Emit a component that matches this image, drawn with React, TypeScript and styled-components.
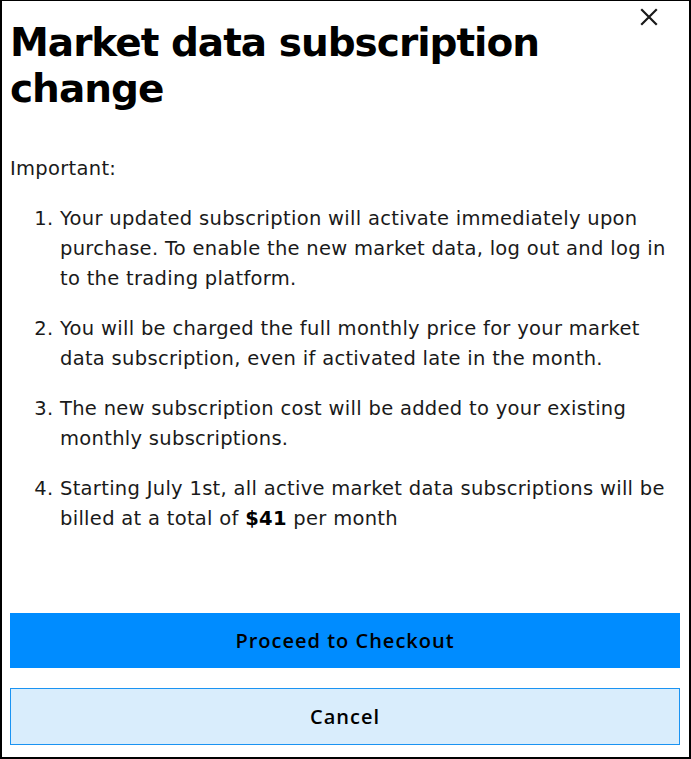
import * as React from "react";
import styled, { createGlobalStyle } from "styled-components";

const GlobalStyle = createGlobalStyle`
  html, body {
    margin: 0;
    padding: 0;
    background: #ffffff;
  }
  body {
    font-family: "DejaVu Sans", "Noto Sans", sans-serif;
    color: #1a1a1a;
  }
`;

const notes: React.ReactNode[] = [
  "Your updated subscription will activate immediately upon purchase. To enable the new market data, log out and log in to the trading platform.",
  "You will be charged the full monthly price for your market data subscription, even if activated late in the month.",
  "The new subscription cost will be added to your existing monthly subscriptions.",
  <>
    Starting July 1st, all active market data subscriptions will be billed at a
    total of <b>$41</b> per month
  </>,
];

const App: React.FC = () => {
  return (
    <>
      <GlobalStyle />
      <Dialog>
        <CloseButton aria-label="Close">
          <svg width="18" height="18" viewBox="0 0 18 18">
            <path
              d="M2 2 L16 16 M16 2 L2 16"
              stroke="#1a1a1a"
              strokeWidth="2.2"
              strokeLinecap="square"
            />
          </svg>
        </CloseButton>
        <Title>Market data subscription change</Title>
        <Body>
          <Lead>Important:</Lead>
          <Notes>
            {notes.map((note, index) => (
              <li key={index}>{note}</li>
            ))}
          </Notes>
        </Body>
        <Actions>
          <ActionButton $primary>Proceed to Checkout</ActionButton>
          <ActionButton>Cancel</ActionButton>
        </Actions>
      </Dialog>
    </>
  );
};

const Dialog = styled.div`
  position: relative;
  box-sizing: border-box;
  width: 691px;
  height: 759px;
  border: 2px solid #000;
  border-top-width: 1px;
  background: #fff;
  padding: 19px 9px 12px 8px;
  display: flex;
  flex-direction: column;
`;

const CloseButton = styled.button`
  position: absolute;
  top: 5px;
  right: 29px;
  width: 22px;
  height: 22px;
  padding: 2px;
  border: none;
  background: transparent;
  cursor: pointer;
  display: flex;
  align-items: center;
  justify-content: center;
`;

const Title = styled.h1`
  margin: 0;
  padding-right: 60px;
  font-size: 39px;
  line-height: 46px;
  font-weight: 700;
  letter-spacing: -1px;
  color: #000;
`;

const Body = styled.div`
  margin-top: 42px;
  font-size: 19.5px;
  line-height: 30px;
  letter-spacing: 0.3px;
`;

const Lead = styled.p`
  margin: 0;
`;

const Notes = styled.ol`
  margin: 20px 0 0;
  padding-left: 50px;

  & li {
    margin-bottom: 20px;
  }

  & li:last-child {
    margin-bottom: 0;
  }

  & b {
    font-weight: 700;
    color: #000;
  }
`;

const Actions = styled.div`
  margin-top: auto;
  display: flex;
  flex-direction: column;
  gap: 20px;
`;

const ActionButton = styled.button<{ $primary?: boolean }>`
  box-sizing: border-box;
  width: 100%;
  height: ${(p) => (p.$primary ? "55px" : "57px")};
  border: 1px solid ${(p) => (p.$primary ? "#008cff" : "#1a93f2")};
  background: ${(p) => (p.$primary ? "#008cff" : "#d9edfc")};
  color: #000;
  font-family: "Open Sans", "Noto Sans", sans-serif;
  font-size: 20px;
  font-weight: 600;
  letter-spacing: 1px;
  cursor: pointer;
`;

export default App;
